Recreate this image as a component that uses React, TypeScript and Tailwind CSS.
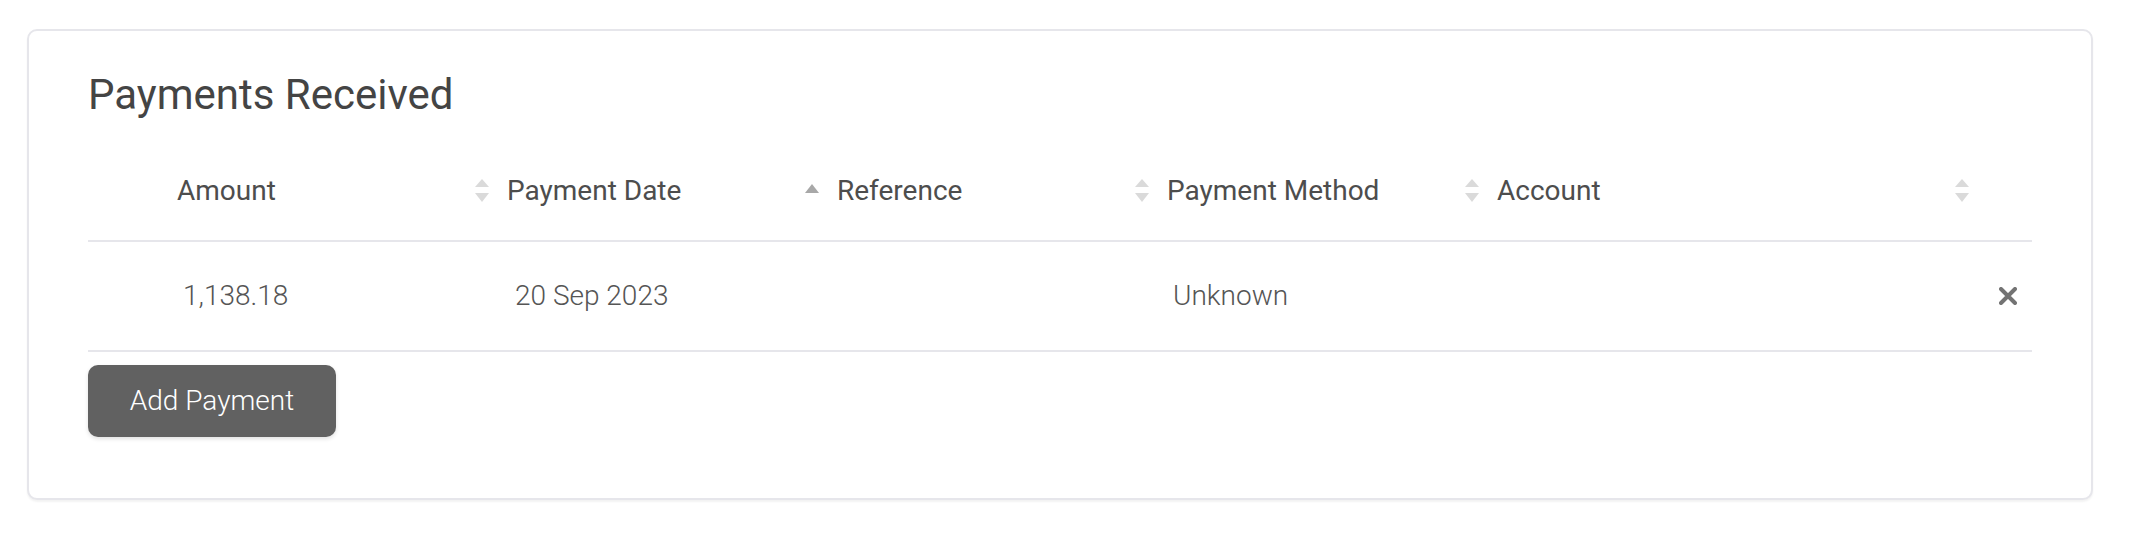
interface Column {
  label: string;
  width: string;
  sort: "none" | "asc";
}

const columns: Column[] = [
  { label: "Amount", width: "w-[330px]", sort: "none" },
  { label: "Payment Date", width: "w-[330px]", sort: "asc" },
  { label: "Reference", width: "w-[330px]", sort: "none" },
  { label: "Payment Method", width: "w-[330px]", sort: "none" },
  { label: "Account", width: "w-[490px]", sort: "none" },
];

const payments = [
  {
    amount: "1,138.18",
    date: "20 Sep 2023",
    reference: "",
    method: "Unknown",
    account: "",
  },
];

const SortIcon = ({ sort }: { sort: "none" | "asc" }) => {
  if (sort === "asc") {
    return (
      <svg width="14" height="23" viewBox="0 0 14 23" className="shrink-0">
        <polygon points="0,14 7,5 14,14" fill="#a8a8a8" />
      </svg>
    );
  }
  return (
    <svg width="14" height="23" viewBox="0 0 14 23" className="shrink-0">
      <polygon points="0,8 7,0 14,8" fill="#dadada" />
      <polygon points="0,14 7,23 14,14" fill="#dadada" />
    </svg>
  );
};

const RemoveIcon = () => (
  <svg width="18" height="18" viewBox="0 0 18 18" className="shrink-0">
    <path d="M2 2 L16 16 M16 2 L2 16" stroke="#737373" strokeWidth="4" strokeLinecap="round" />
  </svg>
);

const App = () => {
  return (
    <div className="min-h-screen bg-white pt-[29px] pl-[27px] font-['Roboto',sans-serif]">
      <div className="w-[2066px] rounded-[10px] border-2 border-[#e6e6eb] bg-white px-[59px] pt-[38px] pb-[61px] shadow-[0_2px_2px_rgba(0,0,0,0.05)]">
        <h2 className="text-[42px] leading-[52px] font-normal text-[#444]">Payments Received</h2>

        {/* Table */}
        <div className="mt-[15px]">
          <div className="flex h-[106px] items-center border-b-2 border-[#e6e6eb] pt-[5px]">
            <div className="w-[77px] shrink-0" />
            {columns.map((col) => (
              <div
                key={col.label}
                className={`${col.width} flex shrink-0 items-center justify-between pr-[6px] pl-[12px]`}
              >
                <span className="text-[28px] text-[#4d4d4d]">{col.label}</span>
                <SortIcon sort={col.sort} />
              </div>
            ))}
            <div className="flex-1" />
          </div>

          {payments.map((p) => (
            <div key={p.amount} className="flex h-[110px] items-center border-b-2 border-[#e6e6eb] text-[28px] font-light text-[#555]">
              <div className="w-[77px] shrink-0" />
              <div className="w-[330px] shrink-0 pl-[18px]">{p.amount}</div>
              <div className="w-[330px] shrink-0 pl-[20px]">{p.date}</div>
              <div className="w-[330px] shrink-0 pl-[18px]">{p.reference}</div>
              <div className="w-[330px] shrink-0 pl-[18px]">{p.method}</div>
              <div className="w-[490px] shrink-0 pl-[18px]">{p.account}</div>
              <div className="flex flex-1 justify-end pr-[15px]">
                <RemoveIcon />
              </div>
            </div>
          ))}
        </div>

        <button
          type="button"
          className="mt-[13px] h-[72px] w-[248px] rounded-[10px] bg-[#616161] text-[28px] font-light text-white shadow-[0_2px_4px_rgba(0,0,0,0.12)]"
        >
          Add Payment
        </button>
      </div>
    </div>
  );
};

export default App;
